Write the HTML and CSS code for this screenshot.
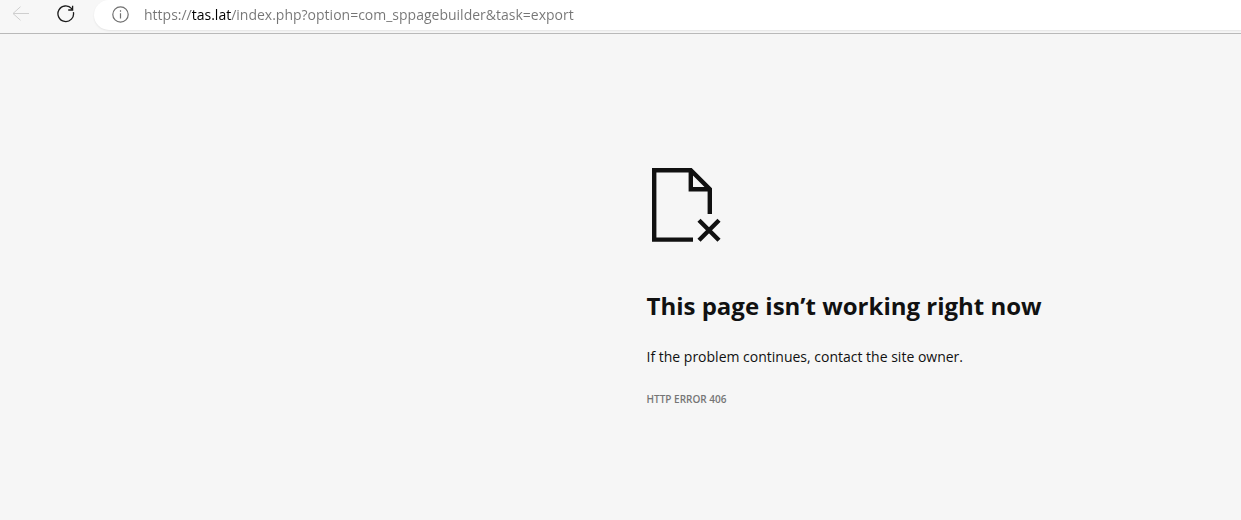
FILE: index.html
```html
<!DOCTYPE html>
<html lang="en">
<head>
<meta charset="utf-8">
<meta name="viewport" content="width=device-width, initial-scale=1">
<title>tas.lat</title>
<link rel="stylesheet" href="styles.css">
</head>
<body>
<header class="toolbar">
  <button class="tool tool-back" type="button" aria-label="Back" disabled>
    <svg width="18" height="16" viewBox="0 0 18 16" fill="none" stroke="currentColor"><path d="M8.5 .7 1 7.5l7.5 6.8M1 7.5h16"/></svg>
  </button>
  <button class="tool" type="button" aria-label="Refresh">
    <svg width="18" height="18" viewBox="0 0 18 18" fill="none" stroke="currentColor" stroke-width="1.3"><path d="M16.4 7.2A7.8 7.8 0 1 1 14.7 3.7L15.7 4.9M15.6.8V5H11.2"/></svg>
  </button>
  <div class="address">
    <button class="tool tool-info" type="button" aria-label="View site information">
      <svg width="17" height="17" viewBox="0 0 17 17" fill="none" stroke="currentColor" stroke-width="1.2"><circle cx="8.5" cy="8.5" r="7.7"/><path d="M8.5 7.2v5.3M8.5 4.3v1.4"/></svg>
    </button>
    <input class="url" type="text" aria-label="Address" spellcheck="false" value="https://tas.lat/index.php?option=com_sppagebuilder&amp;task=export">
  </div>
</header>
<main class="error">
  <svg class="error-icon" width="70" height="74" viewBox="0 0 70 74" fill="none" stroke="currentColor" stroke-width="4.4" aria-hidden="true"><path d="M41 71.6H2.2V2.2H38.8L57.8 21.2v24.8M38.8 2V21.2H57.8M47 52.3l20 20M67 52.3l-20 20"/></svg>
  <h1 class="error-title">This page isn’t working right now</h1>
  <p class="error-text">If the problem continues, contact the site owner.</p>
  <p class="error-code">HTTP ERROR 406</p>
</main>
</body>
</html>
```
FILE: styles.css
```css
* { box-sizing: border-box; }
body {
  margin: 0;
  min-height: 100vh;
  background: #f6f6f6;
  color: #111;
  font-family: "Open Sans", "Noto Sans", sans-serif;
}
.toolbar {
  display: flex;
  align-items: flex-start;
  height: 34px;
  padding-left: 8px;
  gap: 20px;
  background: #f7f7f7;
  border-bottom: 1px solid #b9b9b9;
}
.tool {
  display: flex;
  align-items: center;
  justify-content: center;
  width: 25px;
  height: 28px;
  padding: 0;
  border: 0;
  background: none;
  color: #1b1b1b;
}
.tool-back { color: #cfcfcf; }
.tool-info { color: #707070; }
.address {
  display: flex;
  flex: 1;
  align-items: flex-start;
  gap: 11px;
  height: 30px;
  margin-left: -4px;
  padding-left: 14px;
  background: #fff;
  border-radius: 15px 0 0 15px;
  box-shadow: 0 1px 2px #00000014;
}
/* The gradient is clipped to the glyphs so that the host name stands out. */
.url {
  flex: 1;
  min-width: 0;
  height: 28px;
  padding: 0;
  border: 0;
  outline: 0;
  background: linear-gradient(90deg, #757575 47px, #000 47px, #000 87px, #757575 87px);
  -webkit-background-clip: text;
  background-clip: text;
  color: transparent;
  caret-color: #111;
  font: 14px "Open Sans", "Noto Sans", sans-serif;
}
.error { padding: 134px 24px 24px calc(50% + 26px); }
.error-icon {
  display: block;
  margin-left: 5px;
}
.error-title {
  margin: 48px 0 0;
  font-size: 24px;
  line-height: 32px;
}
.error-text {
  margin: 25px 0 0;
  font-size: 14px;
  line-height: 20px;
}
.error-code {
  margin: 24px 0 0;
  color: #757575;
  font-size: 10px;
  font-weight: 600;
  line-height: 16px;
}
```
